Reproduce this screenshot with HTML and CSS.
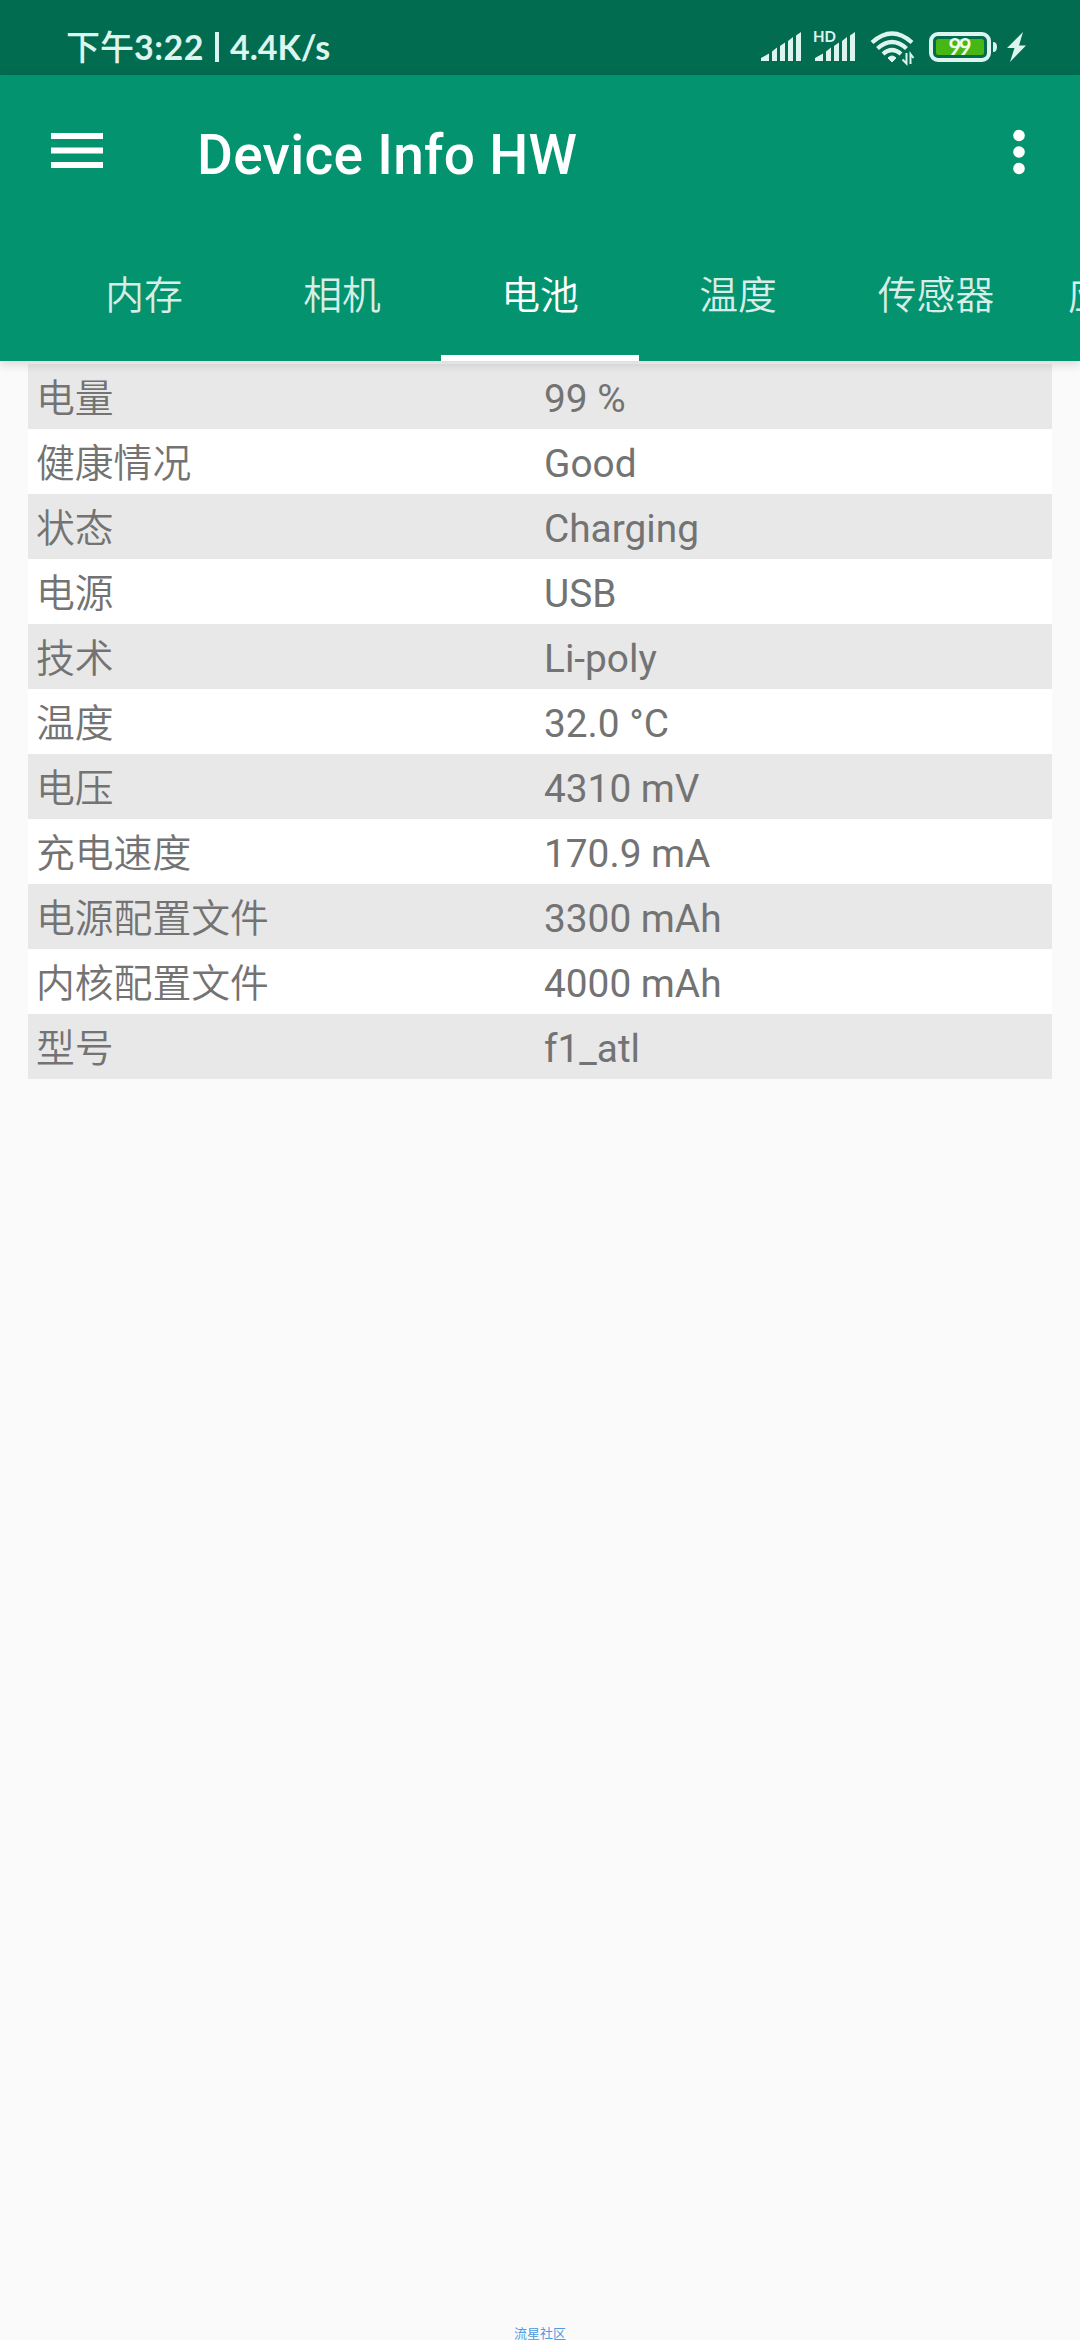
FILE: index.html
```html
<!DOCTYPE html>
<html lang="zh-CN">
<head>
  <meta charset="UTF-8" />
  <meta name="viewport" content="width=device-width, initial-scale=1.0"/>
  <title>Device Info HW</title>
  <link rel="stylesheet" href="styles.css">
</head>
<body>

  <div class="status-bar">
    <div class="status-left">
      <span class="status-cjk">下午</span><span class="status-time">3:22</span>
      <span class="status-divider"></span>
      <span class="status-speed">4.4K/s</span>
    </div>
    <svg class="status-icons" width="272" height="50" viewBox="0 -10 272 50">
      <!-- signal 1 and 2 -->
      <g fill="#dcf5ee">
        <path d="M1 31 V28 L9 23.5 V31 Z M12 31 V21.5 L17 17.5 V31 Z M20 31 V16 L25 12.5 V31 Z M28 31 V11 L33 7 V31 Z M36 31 V5.5 L41 2 V31 Z"/>
        <path d="M55 31 V28 L63 23.5 V31 Z M66 31 V21.5 L71 17.5 V31 Z M74 31 V16 L79 12.5 V31 Z M82 31 V11 L87 7 V31 Z M90 31 V5.5 L95 2 V31 Z"/>
      </g>
      <text class="hd" x="53" y="12" textLength="23">HD</text>
      <!-- wifi -->
      <g fill="none" stroke="#dcf5ee" stroke-width="4.2">
        <path d="M112 12.5 Q132 -5.5 152 12.5"/>
        <path d="M117.5 18.5 Q132 5.5 146.5 18.5"/>
        <path d="M123 24 Q132 16 141 24"/>
      </g>
      <path d="M128 28 Q132 24 136 28 L132 32 Z" fill="#dcf5ee" stroke="#dcf5ee"/>
      <path d="M146.5 23 V33.5 L142.5 29.5 M150.5 34 V24 L153.5 28" fill="none" stroke="#dcf5ee" stroke-width="2"/>
      <!-- battery -->
      <rect x="171" y="4" width="58" height="26" rx="7" fill="none" stroke="#dcf5ee" stroke-width="4"/>
      <rect x="176" y="9" width="48" height="16" rx="2.5" fill="#47b715"/>
      <path d="M233 12 Q237 12 237 17 Q237 22 233 22 Z" fill="#dcf5ee"/>
      <text class="level" x="188.5" y="24.500" textLength="23">99</text>
      <path d="M263 2 L247 18 H254.5 L250 32 L266 15.5 H259 Z" fill="#dcf5ee"/>
    </svg>
  </div>

  <header class="app-bar">
    <div class="toolbar">
      <svg class="menu-icon" width="52" height="36" viewBox="0 0 52 36">
        <path d="M0 0 H52 V6 H0 Z M0 14.5 H52 V20.5 H0 Z M0 29 H52 V35 H0 Z" fill="#fff"/>
      </svg>
      <h1>Device Info HW</h1>
      <svg class="more-icon" width="12" height="46" viewBox="0 0 12 46">
        <g fill="#fff">
          <circle cx="6" cy="6.5" r="5.8"/>
          <circle cx="6" cy="23" r="5.8"/>
          <circle cx="6" cy="39.5" r="5.8"/>
        </g>
      </svg>
    </div>
    <nav class="tabs">
      <a class="tab">内存</a>
      <a class="tab">相机</a>
      <a class="tab active">电池</a>
      <a class="tab">温度</a>
      <a class="tab">传感器</a>
      <a class="tab wide">应用</a>
    </nav>
  </header>

  <main class="list">
    <div class="row"><span>电量</span><span>99 %</span></div>
    <div class="row"><span>健康情况</span><span>Good</span></div>
    <div class="row"><span>状态</span><span>Charging</span></div>
    <div class="row"><span>电源</span><span>USB</span></div>
    <div class="row"><span>技术</span><span>Li-poly</span></div>
    <div class="row"><span>温度</span><span>32.0 °C</span></div>
    <div class="row"><span>电压</span><span>4310 mV</span></div>
    <div class="row"><span>充电速度</span><span>170.9 mA</span></div>
    <div class="row"><span>电源配置文件</span><span>3300 mAh</span></div>
    <div class="row"><span>内核配置文件</span><span>4000 mAh</span></div>
    <div class="row"><span>型号</span><span>f1_atl</span></div>
  </main>

  <footer>流星社区</footer>

</body>
</html>
```
FILE: styles.css
```css
:root {
  --primary: #03946f;
  --primary-dark: #026c51;
  --status-text: #dcf5ee;
  --row-alt: #e8e8e8;
  --text: #737373;
}

* {
  box-sizing: border-box;
}

body {
  margin: 0;
  height: 2340px;
  display: flex;
  flex-direction: column;
  overflow: hidden;
  background-color: #fafafa;
  color: var(--text);
  font-family: Roboto, "Noto Sans CJK SC", sans-serif;
  font-size: 38.8px;
}

.status-bar {
  height: 75px;
  flex: none;
  display: flex;
  justify-content: space-between;
  padding: 20px 48px 0 66px;
  background-color: var(--primary-dark);
  color: var(--status-text);
}

.status-left {
  display: flex;
  align-items: center;
  height: 36px;
  margin-top: 9px;
  font-family: Lato, "Noto Sans CJK SC", sans-serif;
  font-size: 34px;
  font-weight: 700;
  line-height: 36px;
}

.status-cjk {
  font-weight: 500;
}

.status-time {
  letter-spacing: 0.5px;
}

.status-divider {
  width: 4px;
  height: 30px;
  margin: 0 11px;
  background-color: var(--status-text);
}

.hd {
  font: 700 15px Lato, sans-serif;
  fill: var(--status-text);
}

.level {
  font: 700 22px Lato, sans-serif;
  fill: #eefbe9;
}

.app-bar {
  height: 286px;
  flex: none;
  z-index: 1;
  background-color: var(--primary);
  box-shadow: 0 3px 10px rgba(0, 0, 0, 0.15);
  color: #fff;
}

.toolbar {
  height: 154px;
  display: flex;
  align-items: center;
  padding: 0 55px 0 51px;
}

.menu-icon {
  margin-top: -3px;
}

h1 {
  flex: 1;
  margin: 5px 0 0 94px;
  font-size: 55px;
  font-weight: 500;
  letter-spacing: 0.3px;
}

.tabs {
  height: 132px;
  display: flex;
  padding-left: 45px;
  overflow: hidden;
}

.tab {
  width: 198px;
  flex: none;
  padding-top: 25px;
  border-bottom: 6px solid transparent;
  text-align: center;
  font-weight: 350;
  line-height: 84px;
  color: rgba(255, 255, 255, 0.85);
}

.tab.active {
  color: #fff;
  border-bottom-color: #fff;
}

.tab.wide {
  padding-left: 33px;
  text-align: left;
}

.list {
  margin: 3px 28px 0;
}

.row {
  height: 65px;
  display: grid;
  grid-template-columns: 508px 1fr;
  padding: 2px 0 0 8px;
  line-height: 65px;
  background-color: #fff;
}

.row:nth-child(odd) {
  background-color: var(--row-alt);
}

.row span:first-child {
  font-weight: 350;
}

footer {
  margin-top: auto;
  text-align: center;
  font-size: 13px;
  line-height: 12px;
  color: #4f9be0;
}
```
